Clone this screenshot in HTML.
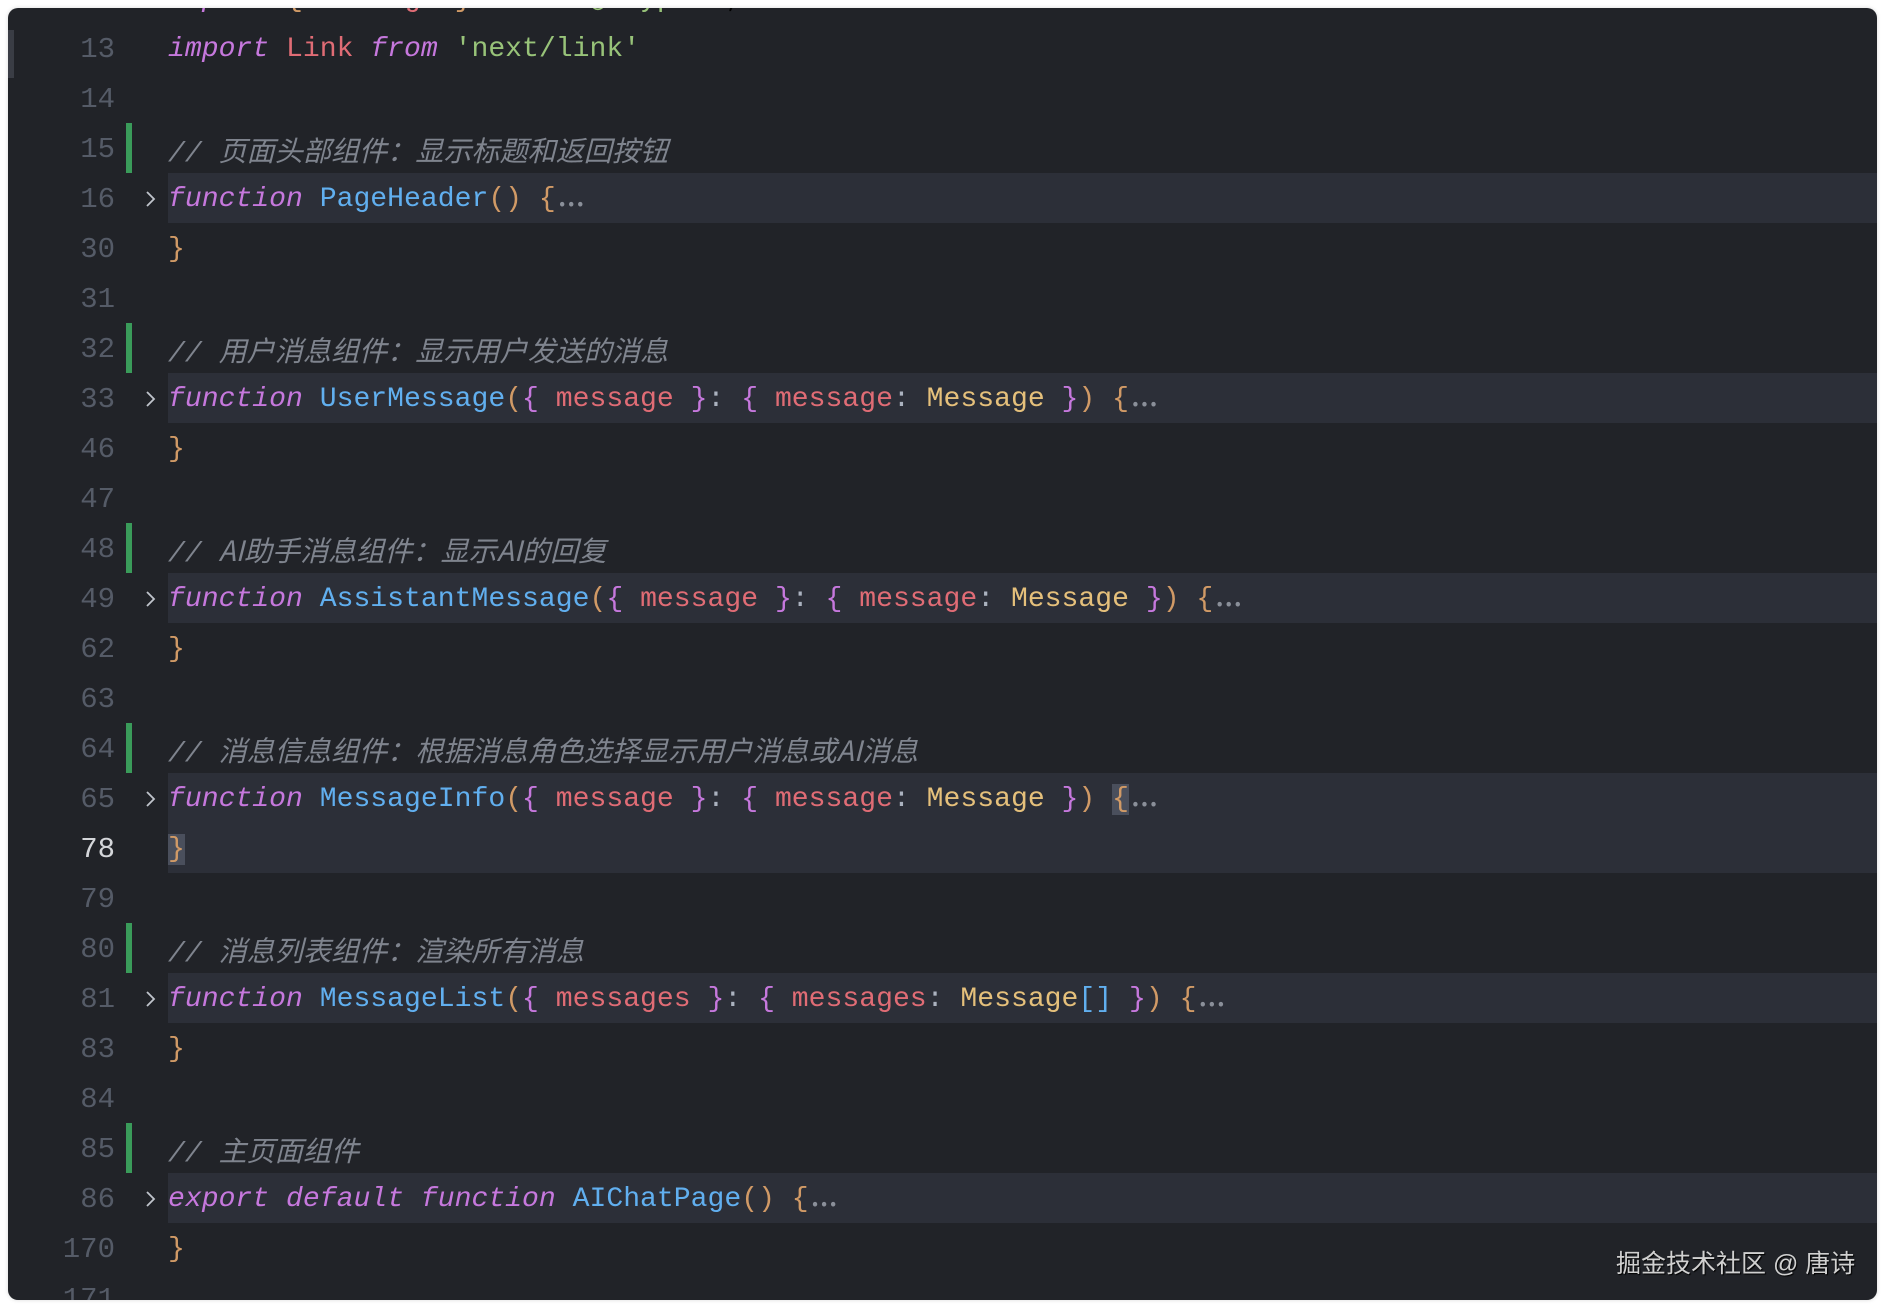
<!DOCTYPE html>
<html><head><meta charset="utf-8"><style>
html,body{margin:0;padding:0;background:#fff;width:1886px;height:1308px;overflow:hidden}
.card{position:absolute;left:8px;top:8px;width:1869px;height:1292px;background:#212328;border-radius:10px;overflow:hidden;box-shadow:0 0 4px rgba(0,0,0,.15)}
.row{position:absolute;left:0;width:1869px;height:50px;font-family:"Liberation Mono","Noto Sans CJK SC",monospace;font-size:28.1px;line-height:54px;white-space:pre}
.hl{position:absolute;left:160px;right:0;top:0;height:50px;background:#2c2f38}
.num{position:absolute;left:0;width:107px;text-align:right;color:#555b67;font-size:29px}
.code{position:absolute;left:160px;top:0}
.bar{position:absolute;left:118px;top:0;width:6px;height:50px;background:#3a9b5a}
.chev{position:absolute;left:133px;top:16px;width:18px;height:20px}
.k{color:#c678dd;font-style:italic}.f{color:#61afef}.r{color:#e06c75}.y{color:#e5c07b}.o{color:#d19a66}.s{color:#98c379}.p{color:#c678dd}.w{color:#abb2bf}.c{color:#7f848e;font-style:italic}.cj{font-family:"Noto Sans CJK SC",sans-serif;font-style:italic}
.dots{color:#8a8f99;font-size:24px;font-weight:bold;letter-spacing:-3px;margin-left:2px}
.sel{background:#4a4f5c}
.wm{position:absolute;left:1616px;top:1244px;font-family:"Liberation Sans","Noto Sans CJK SC",sans-serif;font-size:25px;color:#d0d0d0;text-shadow:1px 1px 1px #000}
.sb{position:absolute;left:0;top:22px;width:6px;height:48px;background:#3a3d45}
</style></head><body>
<div class="card">
<div class="sb"></div>
<div class="row" style="top:-35px"><span class="num">12</span><span class="code"><span class="k">import</span> <span class="o">{</span> <span class="r">Message</span> <span class="o">}</span> <span class="k">from</span> <span class="s">'@/types'</span>; <span class="k">...</span></span></div>
<div class="row" style="top:15px"><span class="num">13</span><span class="code"><span class="k">import</span> <span class="r">Link</span> <span class="k">from</span> <span class="s">'next/link'</span></span></div>
<div class="row" style="top:65px"><span class="num">14</span></div>
<div class="row" style="top:115px"><div class="bar"></div><span class="num">15</span><span class="code c">// <span class="cj">页面头部组件：显示标题和返回按钮</span></span></div>
<div class="row" style="top:165px"><div class="hl"></div><span class="num">16</span><svg class="chev" viewBox="0 0 18 20"><path d="M6 3 L13 10 L6 17" fill="none" stroke="#c0c4cc" stroke-width="1.8"/></svg><span class="code"><span class="k">function</span> <span class="f">PageHeader</span><span class="o">()</span> <span class="o">{</span><span class="dots">⋯</span></span></div>
<div class="row" style="top:215px"><span class="num">30</span><span class="code"><span class="o">}</span></span></div>
<div class="row" style="top:265px"><span class="num">31</span></div>
<div class="row" style="top:315px"><div class="bar"></div><span class="num">32</span><span class="code c">// <span class="cj">用户消息组件：显示用户发送的消息</span></span></div>
<div class="row" style="top:365px"><div class="hl"></div><span class="num">33</span><svg class="chev" viewBox="0 0 18 20"><path d="M6 3 L13 10 L6 17" fill="none" stroke="#c0c4cc" stroke-width="1.8"/></svg><span class="code"><span class="k">function</span> <span class="f">UserMessage</span><span class="o">(</span><span class="p">{</span> <span class="r">message</span> <span class="p">}</span><span class="w">:</span> <span class="p">{</span> <span class="r">message</span><span class="w">:</span> <span class="y">Message</span> <span class="p">}</span><span class="o">)</span> <span class="o">{</span><span class="dots">⋯</span></span></div>
<div class="row" style="top:415px"><span class="num">46</span><span class="code"><span class="o">}</span></span></div>
<div class="row" style="top:465px"><span class="num">47</span></div>
<div class="row" style="top:515px"><div class="bar"></div><span class="num">48</span><span class="code c">// <span class="cj">AI助手消息组件：显示AI的回复</span></span></div>
<div class="row" style="top:565px"><div class="hl"></div><span class="num">49</span><svg class="chev" viewBox="0 0 18 20"><path d="M6 3 L13 10 L6 17" fill="none" stroke="#c0c4cc" stroke-width="1.8"/></svg><span class="code"><span class="k">function</span> <span class="f">AssistantMessage</span><span class="o">(</span><span class="p">{</span> <span class="r">message</span> <span class="p">}</span><span class="w">:</span> <span class="p">{</span> <span class="r">message</span><span class="w">:</span> <span class="y">Message</span> <span class="p">}</span><span class="o">)</span> <span class="o">{</span><span class="dots">⋯</span></span></div>
<div class="row" style="top:615px"><span class="num">62</span><span class="code"><span class="o">}</span></span></div>
<div class="row" style="top:665px"><span class="num">63</span></div>
<div class="row" style="top:715px"><div class="bar"></div><span class="num">64</span><span class="code c">// <span class="cj">消息信息组件：根据消息角色选择显示用户消息或AI消息</span></span></div>
<div class="row" style="top:765px"><div class="hl"></div><span class="num">65</span><svg class="chev" viewBox="0 0 18 20"><path d="M6 3 L13 10 L6 17" fill="none" stroke="#c0c4cc" stroke-width="1.8"/></svg><span class="code"><span class="k">function</span> <span class="f">MessageInfo</span><span class="o">(</span><span class="p">{</span> <span class="r">message</span> <span class="p">}</span><span class="w">:</span> <span class="p">{</span> <span class="r">message</span><span class="w">:</span> <span class="y">Message</span> <span class="p">}</span><span class="o">)</span> <span class="o sel">{</span><span class="dots">⋯</span></span></div>
<div class="row" style="top:815px"><div class="hl"></div><span class="num" style="color:#d4d6da">78</span><span class="code"><span class="o sel">}</span></span></div>
<div class="row" style="top:865px"><span class="num">79</span></div>
<div class="row" style="top:915px"><div class="bar"></div><span class="num">80</span><span class="code c">// <span class="cj">消息列表组件：渲染所有消息</span></span></div>
<div class="row" style="top:965px"><div class="hl"></div><span class="num">81</span><svg class="chev" viewBox="0 0 18 20"><path d="M6 3 L13 10 L6 17" fill="none" stroke="#c0c4cc" stroke-width="1.8"/></svg><span class="code"><span class="k">function</span> <span class="f">MessageList</span><span class="o">(</span><span class="p">{</span> <span class="r">messages</span> <span class="p">}</span><span class="w">:</span> <span class="p">{</span> <span class="r">messages</span><span class="w">:</span> <span class="y">Message</span><span class="f">[]</span> <span class="p">}</span><span class="o">)</span> <span class="o">{</span><span class="dots">⋯</span></span></div>
<div class="row" style="top:1015px"><span class="num">83</span><span class="code"><span class="o">}</span></span></div>
<div class="row" style="top:1065px"><span class="num">84</span></div>
<div class="row" style="top:1115px"><div class="bar"></div><span class="num">85</span><span class="code c">// <span class="cj">主页面组件</span></span></div>
<div class="row" style="top:1165px"><div class="hl"></div><span class="num">86</span><svg class="chev" viewBox="0 0 18 20"><path d="M6 3 L13 10 L6 17" fill="none" stroke="#c0c4cc" stroke-width="1.8"/></svg><span class="code"><span class="k">export</span> <span class="k">default</span> <span class="k">function</span> <span class="f">AIChatPage</span><span class="o">()</span> <span class="o">{</span><span class="dots">⋯</span></span></div>
<div class="row" style="top:1215px"><span class="num">170</span><span class="code"><span class="o">}</span></span></div>
<div class="row" style="top:1265px"><span class="num">171</span></div>
</div>
<div class="wm">掘金技术社区 @ 唐诗</div>
</body></html>
